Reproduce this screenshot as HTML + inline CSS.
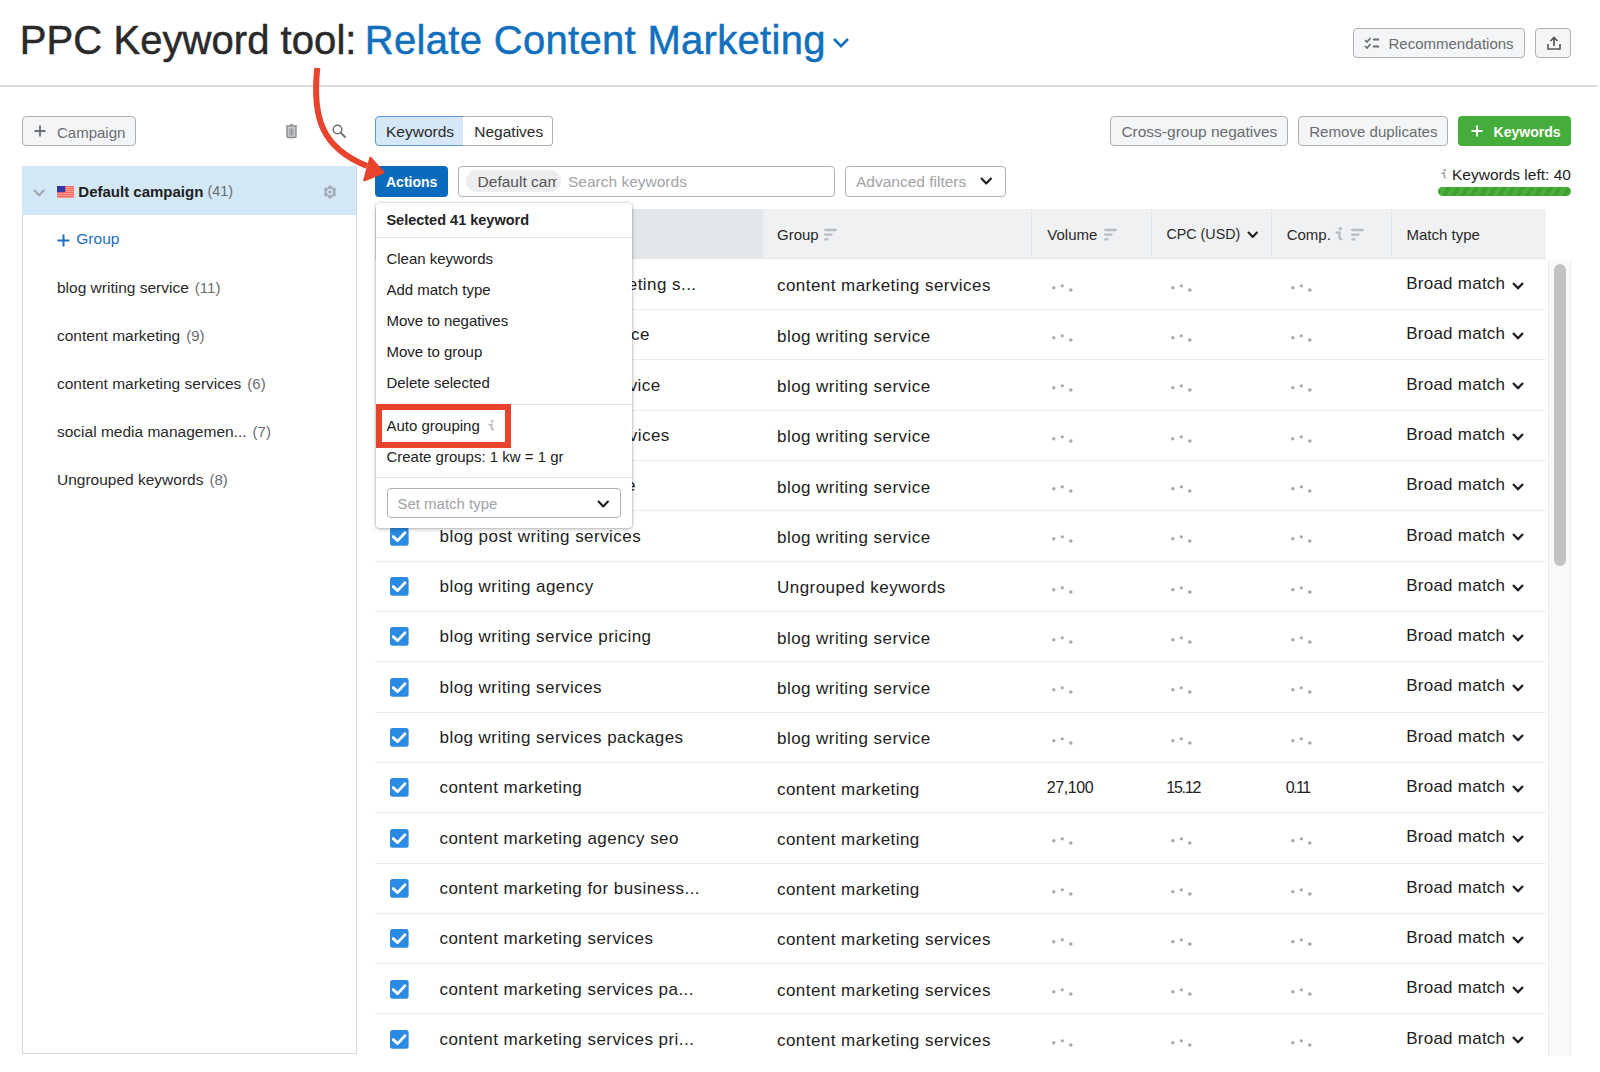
<!DOCTYPE html>
<html><head><meta charset="utf-8">
<style>
*{box-sizing:border-box;margin:0;padding:0}
html,body{width:1600px;height:1072px;overflow:hidden;background:#fff}
body{font-family:"Liberation Sans",sans-serif;color:#222;position:relative}
.a{position:absolute}
.t{position:absolute;white-space:nowrap;line-height:1}
svg{overflow:visible}
</style></head><body>
<div class="t" style="left:19.8px;top:20.14px;font-size:40px;color:#2a2a2a;font-weight:normal;-webkit-text-stroke:0.5px currentColor;letter-spacing:0.06px">PPC Keyword tool:</div>
<div class="t" style="left:364.8px;top:20.14px;font-size:40px;color:#1170bd;font-weight:normal;-webkit-text-stroke:0.5px currentColor;letter-spacing:0.31px">Relate Content Marketing</div>
<svg class="a" style="left:832.8px;top:37.6px" width="16" height="10.2" viewBox="0 0 16 10.2"><path d="M1 1 L8 8.2 L15 1" fill="none" stroke="#1170bd" stroke-width="2.7"/></svg>
<div class="a" style="left:1353px;top:27.5px;width:172px;height:30.5px;border:1px solid #adb1b5;border-radius:4px;background:#f4f5f6"></div>
<div class="t" style="left:1388.5px;top:35.70px;font-size:15px;color:#6a6d72;font-weight:normal;">Recommendations</div>
<svg class="a" style="left:1364px;top:37px" width="16" height="12" viewBox="0 0 16 12"><path d="M1 3 L3 5 L6.5 1" fill="none" stroke="#6a6d72" stroke-width="1.6"/><path d="M1 9 L3 11 L6.5 7" fill="none" stroke="#6a6d72" stroke-width="1.6"/><path d="M9 2.5 H15 M9 9.5 H15" stroke="#6a6d72" stroke-width="1.8"/></svg>
<div class="a" style="left:1535px;top:27.5px;width:36px;height:30.5px;border:1px solid #adb1b5;border-radius:4px;background:#f4f5f6"></div>
<svg class="a" style="left:1547px;top:36px" width="14" height="14" viewBox="0 0 14 14"><path d="M7 10 V2 M3.5 5 L7 1.5 L10.5 5" fill="none" stroke="#555" stroke-width="1.7"/><path d="M1 8 V13 H13 V8" fill="none" stroke="#555" stroke-width="1.6"/></svg>
<div class="a" style="left:0px;top:85px;width:1597px;height:2px;background:#d9dbdd"></div>
<div class="a" style="left:22px;top:116px;width:114px;height:30px;border:1px solid #adb1b5;border-radius:4px;background:#f4f5f6"></div>
<svg class="a" style="left:34px;top:125px" width="12" height="12" viewBox="0 0 12 12"><path d="M6 0.5 V11.5 M0.5 6 H11.5" stroke="#6a6d72" stroke-width="1.8"/></svg>
<div class="t" style="left:57px;top:124.60px;font-size:15px;color:#6a6d72;font-weight:normal;">Campaign</div>
<svg class="a" style="left:285px;top:123px" width="13" height="15" viewBox="0 0 13 15"><path d="M1 3 H12" stroke="#8a8d91" stroke-width="1.6"/><path d="M5 2 H8" stroke="#8a8d91" stroke-width="1.6"/><path d="M2 4 V13.5 Q2 14.5 3 14.5 H10 Q11 14.5 11 13.5 V4" fill="#c9cbcd" stroke="#8a8d91" stroke-width="1.4"/><path d="M5 5.5 V12.5 M6.5 5.5 V12.5 M8 5.5 V12.5" stroke="#8a8d91" stroke-width="0.9"/></svg>
<svg class="a" style="left:332px;top:124px" width="14" height="14" viewBox="0 0 14 14"><circle cx="5.5" cy="5.5" r="4.3" fill="none" stroke="#6a6d72" stroke-width="1.5"/><path d="M8.7 8.7 L13 13" stroke="#6a6d72" stroke-width="1.8" stroke-linecap="round"/></svg>
<div class="a" style="left:22px;top:166px;width:335px;height:888px;border:1px solid #d7dadd;border-top:none"></div>
<div class="a" style="left:22px;top:166px;width:334px;height:49px;background:#d3e8f7"></div>
<svg class="a" style="left:32.8px;top:189px" width="12.2" height="7.8" viewBox="0 0 12.2 7.8"><path d="M1.45 1.45 L6.1 6.35 L10.75 1.45" fill="none" stroke="#9ca1a6" stroke-width="1.9" stroke-linecap="round" stroke-linejoin="round"/></svg>
<svg class="a" style="left:56.5px;top:185.8px" width="16.7" height="12" viewBox="0 0 16.7 12"><rect x="0" y="0" width="17" height="12" fill="#f6655e"/><rect x="0" y="1.2" width="17" height="0.9" fill="#ffa59b"/><rect x="0" y="3.2" width="17" height="0.9" fill="#ffa59b"/><rect x="0" y="5.2" width="17" height="0.9" fill="#ffa59b"/><rect x="0" y="7.2" width="17" height="0.9" fill="#ffa59b"/><rect x="0" y="9.2" width="17" height="0.9" fill="#ffa59b"/><rect x="0" y="11.2" width="17" height="0.9" fill="#ffa59b"/><rect x="0" y="0" width="8.3" height="6.2" fill="#3438a4"/></svg>
<div class="t" style="left:78.3px;top:183.80px;font-size:15px;color:#1e1e1e;font-weight:bold;">Default campaign</div>
<div class="t" style="left:207.5px;top:184.40px;font-size:14.3px;color:#6a6d72;font-weight:normal;">(41)</div>
<svg class="a" style="left:323.4px;top:185.1px" width="14" height="14" viewBox="0 0 14 14"><g fill="#a2adb6"><rect x="4.9" y="0.6" width="4.2" height="12.8" rx="1.6"/><rect x="4.9" y="0.6" width="4.2" height="12.8" rx="1.6" transform="rotate(60 7 7)"/><rect x="4.9" y="0.6" width="4.2" height="12.8" rx="1.6" transform="rotate(120 7 7)"/><circle cx="7" cy="7" r="5"/></g><circle cx="7" cy="7" r="3.2" fill="#d3e8f7"/><circle cx="7" cy="7" r="1.7" fill="#a2adb6"/></svg>
<svg class="a" style="left:57px;top:233.5px" width="13" height="13" viewBox="0 0 13 13"><path d="M6.5 0.5 V12.5 M0.5 6.5 H12.5" stroke="#1a6fc0" stroke-width="2"/></svg>
<div class="t" style="left:76.3px;top:231.48px;font-size:15.5px;color:#1a6fc0;font-weight:normal;">Group</div>
<div class="t" style="left:57px;top:280.28px;font-size:15.5px;color:#2a2a2a;font-weight:normal;">blog writing service<span style="color:#6a6d72;margin-left:6px;font-size:15px">(11)</span></div>
<div class="t" style="left:57px;top:328.28px;font-size:15.5px;color:#2a2a2a;font-weight:normal;">content marketing<span style="color:#6a6d72;margin-left:6px;font-size:15px">(9)</span></div>
<div class="t" style="left:57px;top:376.28px;font-size:15.5px;color:#2a2a2a;font-weight:normal;">content marketing services<span style="color:#6a6d72;margin-left:6px;font-size:15px">(6)</span></div>
<div class="t" style="left:57px;top:424.28px;font-size:15.5px;color:#2a2a2a;font-weight:normal;">social media managemen...<span style="color:#6a6d72;margin-left:6px;font-size:15px">(7)</span></div>
<div class="t" style="left:57px;top:472.28px;font-size:15.5px;color:#2a2a2a;font-weight:normal;">Ungrouped keywords<span style="color:#6a6d72;margin-left:6px;font-size:15px">(8)</span></div>
<div class="a" style="left:375px;top:116px;width:89px;height:30px;border:1px solid #5a9bd8;border-radius:4px 0 0 4px;background:#d6e7f7"></div>
<div class="a" style="left:463px;top:116px;width:90px;height:30px;border:1px solid #adb1b5;border-left:none;border-radius:0 4px 4px 0;background:#fff"></div>
<div class="t" style="left:386px;top:124.08px;font-size:15.5px;color:#2a2a2a;font-weight:normal;">Keywords</div>
<div class="t" style="left:474.3px;top:124.08px;font-size:15.5px;color:#2a2a2a;font-weight:normal;">Negatives</div>
<div class="a" style="left:1110px;top:116px;width:178px;height:30px;border:1px solid #adb1b5;border-radius:4px;background:#f4f5f6"></div>
<div class="t" style="left:1121.4px;top:124.08px;font-size:15.5px;color:#6a6d72;font-weight:normal;">Cross-group negatives</div>
<div class="a" style="left:1298px;top:116px;width:150px;height:30px;border:1px solid #adb1b5;border-radius:4px;background:#f4f5f6"></div>
<div class="t" style="left:1309.2px;top:124.42px;font-size:15.1px;color:#6a6d72;font-weight:normal;">Remove duplicates</div>
<div class="a" style="left:1458px;top:116px;width:113px;height:30px;border-radius:4px;background:#45ad3b"></div>
<svg class="a" style="left:1471px;top:125px" width="12" height="12" viewBox="0 0 12 12"><path d="M6 0.5 V11.5 M0.5 6 H11.5" stroke="#fff" stroke-width="2"/></svg>
<div class="t" style="left:1493.6px;top:125.35px;font-size:14px;color:#fff;font-weight:bold;">Keywords</div>
<div class="a" style="left:375px;top:166px;width:73px;height:30.5px;border-radius:4px;background:#0a6abb"></div>
<div class="t" style="left:386px;top:174.85px;font-size:14px;color:#fff;font-weight:bold;">Actions</div>
<div class="a" style="left:457.5px;top:166px;width:377px;height:30.5px;border:1px solid #adb1b5;border-radius:4px;background:#fff"></div>
<div class="a" style="left:466px;top:170px;width:95px;height:22px;border-radius:11px;background:#eceef0"></div>
<div class="a" style="left:477px;top:166px;width:80px;height:30px;overflow:hidden"><div class="t" style="left:0.6px;top:7.58px;font-size:15.5px;color:#555;font-weight:normal;">Default campaign</div>
</div>
<div class="t" style="left:568px;top:173.58px;font-size:15.5px;color:#a0a3a7;font-weight:normal;">Search keywords</div>
<div class="a" style="left:845px;top:166px;width:161px;height:30.5px;border:1px solid #adb1b5;border-radius:4px;background:#fff"></div>
<div class="t" style="left:856px;top:173.58px;font-size:15.5px;color:#a0a3a7;font-weight:normal;">Advanced filters</div>
<svg class="a" style="left:980px;top:177px" width="12.5" height="8" viewBox="0 0 12.5 8"><path d="M1.6 1.6 L6.25 6.4 L10.9 1.6" fill="none" stroke="#222" stroke-width="2.2" stroke-linecap="round" stroke-linejoin="round"/></svg>
<svg class="a" style="left:1440.6px;top:169.2px" width="5.76" height="9.36" viewBox="0 0 5.76 9.36"><g transform="scale(0.72)"><circle cx="5.2" cy="1.7" r="1.75" fill="#a3a9ae"/><path d="M0.6 5.7 H4.5 V10.2 Q4.5 12.1 6.3 12.1 H7.4" fill="none" stroke="#a3a9ae" stroke-width="2.3"/></g></svg>
<div class="t" style="left:1452px;top:166.88px;font-size:15.5px;color:#222;font-weight:normal;">Keywords left: 40</div>
<div class="a" style="left:1438px;top:187px;width:133px;height:9px;border-radius:5px;background:repeating-linear-gradient(-60deg,#4aae3a 0 4px,#3f9f31 4px 8px)"></div>
<div class="a" style="left:375px;top:209px;width:388px;height:50px;background:#e4e7e9"></div>
<div class="a" style="left:763px;top:209px;width:783px;height:50px;background:#eff1f3"></div>
<div class="a" style="left:1031px;top:209px;width:1px;height:50px;background:#e2e5e8"></div>
<div class="a" style="left:1151px;top:209px;width:1px;height:50px;background:#e2e5e8"></div>
<div class="a" style="left:1271px;top:209px;width:1px;height:50px;background:#e2e5e8"></div>
<div class="a" style="left:1391px;top:209px;width:1px;height:50px;background:#e2e5e8"></div>
<div class="a" style="left:375px;top:258px;width:1171px;height:1px;background:#e3e6e8"></div>
<div class="t" style="left:777px;top:226.60px;font-size:15px;color:#2a2a2a;font-weight:normal;">Group</div>
<svg class="a" style="left:823.5px;top:229px" width="13" height="11" viewBox="0 0 13 11"><path d="M1.2 1 H11.8 M1.2 5.7 H7.5 M1.2 10.4 H3.5" stroke="#b9bec3" stroke-width="2.3" stroke-linecap="round"/></svg>
<div class="t" style="left:1047.3px;top:226.60px;font-size:15px;color:#2a2a2a;font-weight:normal;">Volume</div>
<svg class="a" style="left:1103.5px;top:229px" width="13" height="11" viewBox="0 0 13 11"><path d="M1.2 1 H11.8 M1.2 5.7 H7.5 M1.2 10.4 H3.5" stroke="#b9bec3" stroke-width="2.3" stroke-linecap="round"/></svg>
<div class="t" style="left:1166.4px;top:227.20px;font-size:14.3px;color:#2a2a2a;font-weight:normal;">CPC (USD)</div>
<svg class="a" style="left:1247.4px;top:230.5px" width="11.5" height="7.5" viewBox="0 0 11.5 7.5"><path d="M1.6 1.6 L5.75 5.9 L9.9 1.6" fill="none" stroke="#222" stroke-width="2.2" stroke-linecap="round" stroke-linejoin="round"/></svg>
<div class="t" style="left:1286.7px;top:226.60px;font-size:15px;color:#2a2a2a;font-weight:normal;">Comp.</div>
<svg class="a" style="left:1334.6px;top:226.9px" width="8.0" height="13.0" viewBox="0 0 8.0 13.0"><g transform="scale(1.0)"><circle cx="5.2" cy="1.7" r="1.75" fill="#b7bcc0"/><path d="M0.6 5.7 H4.5 V10.2 Q4.5 12.1 6.3 12.1 H7.4" fill="none" stroke="#b7bcc0" stroke-width="2.3"/></g></svg>
<svg class="a" style="left:1351px;top:229px" width="13" height="11" viewBox="0 0 13 11"><path d="M1.2 1 H11.8 M1.2 5.7 H7.5 M1.2 10.4 H3.5" stroke="#b9bec3" stroke-width="2.3" stroke-linecap="round"/></svg>
<div class="t" style="left:1406.5px;top:226.60px;font-size:15px;color:#2a2a2a;font-weight:normal;">Match type</div>
<div class="a" style="left:375px;top:309.0px;width:1171px;height:1px;background:#eceef0"></div>
<svg class="a" style="left:389.9px;top:275.2px" width="19" height="19" viewBox="0 0 19 19"><rect x="0" y="0" width="18.6" height="18.8" rx="2.5" fill="#2b8ae2"/><path d="M3.2 9.6 L7.6 13.6 L15 5.8" fill="none" stroke="#fff" stroke-width="2.8" stroke-linecap="round" stroke-linejoin="round"/></svg>
<div class="t" style="left:296.5px;width:400px;text-align:right;top:276.11px;font-size:17px;letter-spacing:0.45px;color:#222">b2b content marketing s...</div>
<div class="t" style="left:777px;top:277.31px;font-size:17px;color:#222;font-weight:normal;letter-spacing:0.45px">content marketing services</div>
<svg class="a" style="left:1051.5px;top:283.7px" width="21" height="8" viewBox="0 0 21 8"><circle cx="1.8" cy="3.8" r="1.7" fill="#a9a9a9"/><circle cx="10.3" cy="1.8" r="1.6" fill="#a9a9a9"/><circle cx="18.8" cy="6" r="1.8" fill="#a9a9a9"/></svg>
<svg class="a" style="left:1171px;top:283.7px" width="21" height="8" viewBox="0 0 21 8"><circle cx="1.8" cy="3.8" r="1.7" fill="#a9a9a9"/><circle cx="10.3" cy="1.8" r="1.6" fill="#a9a9a9"/><circle cx="18.8" cy="6" r="1.8" fill="#a9a9a9"/></svg>
<svg class="a" style="left:1290.5px;top:283.7px" width="21" height="8" viewBox="0 0 21 8"><circle cx="1.8" cy="3.8" r="1.7" fill="#a9a9a9"/><circle cx="10.3" cy="1.8" r="1.6" fill="#a9a9a9"/><circle cx="18.8" cy="6" r="1.8" fill="#a9a9a9"/></svg>
<div class="t" style="left:1406.2px;top:274.91px;font-size:17px;color:#222;font-weight:normal;letter-spacing:0.25px">Broad match</div>
<svg class="a" style="left:1512px;top:281.59999999999997px" width="12" height="8" viewBox="0 0 12 8"><path d="M1.7 1.7 L6.0 6.3 L10.3 1.7" fill="none" stroke="#222" stroke-width="2.4" stroke-linecap="round" stroke-linejoin="round"/></svg>
<div class="a" style="left:375px;top:359.32px;width:1171px;height:1px;background:#eceef0"></div>
<svg class="a" style="left:389.9px;top:325.52px" width="19" height="19" viewBox="0 0 19 19"><rect x="0" y="0" width="18.6" height="18.8" rx="2.5" fill="#2b8ae2"/><path d="M3.2 9.6 L7.6 13.6 L15 5.8" fill="none" stroke="#fff" stroke-width="2.8" stroke-linecap="round" stroke-linejoin="round"/></svg>
<div class="t" style="left:249.89999999999998px;width:400px;text-align:right;top:326.43px;font-size:17px;letter-spacing:0.45px;color:#222">best blog writing service</div>
<div class="t" style="left:777px;top:327.63px;font-size:17px;color:#222;font-weight:normal;letter-spacing:0.45px">blog writing service</div>
<svg class="a" style="left:1051.5px;top:334.02px" width="21" height="8" viewBox="0 0 21 8"><circle cx="1.8" cy="3.8" r="1.7" fill="#a9a9a9"/><circle cx="10.3" cy="1.8" r="1.6" fill="#a9a9a9"/><circle cx="18.8" cy="6" r="1.8" fill="#a9a9a9"/></svg>
<svg class="a" style="left:1171px;top:334.02px" width="21" height="8" viewBox="0 0 21 8"><circle cx="1.8" cy="3.8" r="1.7" fill="#a9a9a9"/><circle cx="10.3" cy="1.8" r="1.6" fill="#a9a9a9"/><circle cx="18.8" cy="6" r="1.8" fill="#a9a9a9"/></svg>
<svg class="a" style="left:1290.5px;top:334.02px" width="21" height="8" viewBox="0 0 21 8"><circle cx="1.8" cy="3.8" r="1.7" fill="#a9a9a9"/><circle cx="10.3" cy="1.8" r="1.6" fill="#a9a9a9"/><circle cx="18.8" cy="6" r="1.8" fill="#a9a9a9"/></svg>
<div class="t" style="left:1406.2px;top:325.23px;font-size:17px;color:#222;font-weight:normal;letter-spacing:0.25px">Broad match</div>
<svg class="a" style="left:1512px;top:331.91999999999996px" width="12" height="8" viewBox="0 0 12 8"><path d="M1.7 1.7 L6.0 6.3 L10.3 1.7" fill="none" stroke="#222" stroke-width="2.4" stroke-linecap="round" stroke-linejoin="round"/></svg>
<div class="a" style="left:375px;top:409.64px;width:1171px;height:1px;background:#eceef0"></div>
<svg class="a" style="left:389.9px;top:375.84px" width="19" height="19" viewBox="0 0 19 19"><rect x="0" y="0" width="18.6" height="18.8" rx="2.5" fill="#2b8ae2"/><path d="M3.2 9.6 L7.6 13.6 L15 5.8" fill="none" stroke="#fff" stroke-width="2.8" stroke-linecap="round" stroke-linejoin="round"/></svg>
<div class="t" style="left:260.70000000000005px;width:400px;text-align:right;top:376.75px;font-size:17px;letter-spacing:0.45px;color:#222">blog article writing service</div>
<div class="t" style="left:777px;top:377.95px;font-size:17px;color:#222;font-weight:normal;letter-spacing:0.45px">blog writing service</div>
<svg class="a" style="left:1051.5px;top:384.34px" width="21" height="8" viewBox="0 0 21 8"><circle cx="1.8" cy="3.8" r="1.7" fill="#a9a9a9"/><circle cx="10.3" cy="1.8" r="1.6" fill="#a9a9a9"/><circle cx="18.8" cy="6" r="1.8" fill="#a9a9a9"/></svg>
<svg class="a" style="left:1171px;top:384.34px" width="21" height="8" viewBox="0 0 21 8"><circle cx="1.8" cy="3.8" r="1.7" fill="#a9a9a9"/><circle cx="10.3" cy="1.8" r="1.6" fill="#a9a9a9"/><circle cx="18.8" cy="6" r="1.8" fill="#a9a9a9"/></svg>
<svg class="a" style="left:1290.5px;top:384.34px" width="21" height="8" viewBox="0 0 21 8"><circle cx="1.8" cy="3.8" r="1.7" fill="#a9a9a9"/><circle cx="10.3" cy="1.8" r="1.6" fill="#a9a9a9"/><circle cx="18.8" cy="6" r="1.8" fill="#a9a9a9"/></svg>
<div class="t" style="left:1406.2px;top:375.55px;font-size:17px;color:#222;font-weight:normal;letter-spacing:0.25px">Broad match</div>
<svg class="a" style="left:1512px;top:382.23999999999995px" width="12" height="8" viewBox="0 0 12 8"><path d="M1.7 1.7 L6.0 6.3 L10.3 1.7" fill="none" stroke="#222" stroke-width="2.4" stroke-linecap="round" stroke-linejoin="round"/></svg>
<div class="a" style="left:375px;top:459.96000000000004px;width:1171px;height:1px;background:#eceef0"></div>
<svg class="a" style="left:389.9px;top:426.15999999999997px" width="19" height="19" viewBox="0 0 19 19"><rect x="0" y="0" width="18.6" height="18.8" rx="2.5" fill="#2b8ae2"/><path d="M3.2 9.6 L7.6 13.6 L15 5.8" fill="none" stroke="#fff" stroke-width="2.8" stroke-linecap="round" stroke-linejoin="round"/></svg>
<div class="t" style="left:269.79999999999995px;width:400px;text-align:right;top:427.07px;font-size:17px;letter-spacing:0.45px;color:#222">blog content writing services</div>
<div class="t" style="left:777px;top:428.27px;font-size:17px;color:#222;font-weight:normal;letter-spacing:0.45px">blog writing service</div>
<svg class="a" style="left:1051.5px;top:434.65999999999997px" width="21" height="8" viewBox="0 0 21 8"><circle cx="1.8" cy="3.8" r="1.7" fill="#a9a9a9"/><circle cx="10.3" cy="1.8" r="1.6" fill="#a9a9a9"/><circle cx="18.8" cy="6" r="1.8" fill="#a9a9a9"/></svg>
<svg class="a" style="left:1171px;top:434.65999999999997px" width="21" height="8" viewBox="0 0 21 8"><circle cx="1.8" cy="3.8" r="1.7" fill="#a9a9a9"/><circle cx="10.3" cy="1.8" r="1.6" fill="#a9a9a9"/><circle cx="18.8" cy="6" r="1.8" fill="#a9a9a9"/></svg>
<svg class="a" style="left:1290.5px;top:434.65999999999997px" width="21" height="8" viewBox="0 0 21 8"><circle cx="1.8" cy="3.8" r="1.7" fill="#a9a9a9"/><circle cx="10.3" cy="1.8" r="1.6" fill="#a9a9a9"/><circle cx="18.8" cy="6" r="1.8" fill="#a9a9a9"/></svg>
<div class="t" style="left:1406.2px;top:425.87px;font-size:17px;color:#222;font-weight:normal;letter-spacing:0.25px">Broad match</div>
<svg class="a" style="left:1512px;top:432.55999999999995px" width="12" height="8" viewBox="0 0 12 8"><path d="M1.7 1.7 L6.0 6.3 L10.3 1.7" fill="none" stroke="#222" stroke-width="2.4" stroke-linecap="round" stroke-linejoin="round"/></svg>
<div class="a" style="left:375px;top:510.28px;width:1171px;height:1px;background:#eceef0"></div>
<svg class="a" style="left:389.9px;top:476.48px" width="19" height="19" viewBox="0 0 19 19"><rect x="0" y="0" width="18.6" height="18.8" rx="2.5" fill="#2b8ae2"/><path d="M3.2 9.6 L7.6 13.6 L15 5.8" fill="none" stroke="#fff" stroke-width="2.8" stroke-linecap="round" stroke-linejoin="round"/></svg>
<div class="t" style="left:236.0px;width:400px;text-align:right;top:477.39px;font-size:17px;letter-spacing:0.45px;color:#222">blog post writing service</div>
<div class="t" style="left:777px;top:478.59px;font-size:17px;color:#222;font-weight:normal;letter-spacing:0.45px">blog writing service</div>
<svg class="a" style="left:1051.5px;top:484.98px" width="21" height="8" viewBox="0 0 21 8"><circle cx="1.8" cy="3.8" r="1.7" fill="#a9a9a9"/><circle cx="10.3" cy="1.8" r="1.6" fill="#a9a9a9"/><circle cx="18.8" cy="6" r="1.8" fill="#a9a9a9"/></svg>
<svg class="a" style="left:1171px;top:484.98px" width="21" height="8" viewBox="0 0 21 8"><circle cx="1.8" cy="3.8" r="1.7" fill="#a9a9a9"/><circle cx="10.3" cy="1.8" r="1.6" fill="#a9a9a9"/><circle cx="18.8" cy="6" r="1.8" fill="#a9a9a9"/></svg>
<svg class="a" style="left:1290.5px;top:484.98px" width="21" height="8" viewBox="0 0 21 8"><circle cx="1.8" cy="3.8" r="1.7" fill="#a9a9a9"/><circle cx="10.3" cy="1.8" r="1.6" fill="#a9a9a9"/><circle cx="18.8" cy="6" r="1.8" fill="#a9a9a9"/></svg>
<div class="t" style="left:1406.2px;top:476.19px;font-size:17px;color:#222;font-weight:normal;letter-spacing:0.25px">Broad match</div>
<svg class="a" style="left:1512px;top:482.88px" width="12" height="8" viewBox="0 0 12 8"><path d="M1.7 1.7 L6.0 6.3 L10.3 1.7" fill="none" stroke="#222" stroke-width="2.4" stroke-linecap="round" stroke-linejoin="round"/></svg>
<div class="a" style="left:375px;top:560.6px;width:1171px;height:1px;background:#eceef0"></div>
<svg class="a" style="left:389.9px;top:526.8px" width="19" height="19" viewBox="0 0 19 19"><rect x="0" y="0" width="18.6" height="18.8" rx="2.5" fill="#2b8ae2"/><path d="M3.2 9.6 L7.6 13.6 L15 5.8" fill="none" stroke="#fff" stroke-width="2.8" stroke-linecap="round" stroke-linejoin="round"/></svg>
<div class="t" style="left:439.5px;top:527.71px;font-size:17px;color:#222;font-weight:normal;letter-spacing:0.45px">blog post writing services</div>
<div class="t" style="left:777px;top:528.91px;font-size:17px;color:#222;font-weight:normal;letter-spacing:0.45px">blog writing service</div>
<svg class="a" style="left:1051.5px;top:535.3px" width="21" height="8" viewBox="0 0 21 8"><circle cx="1.8" cy="3.8" r="1.7" fill="#a9a9a9"/><circle cx="10.3" cy="1.8" r="1.6" fill="#a9a9a9"/><circle cx="18.8" cy="6" r="1.8" fill="#a9a9a9"/></svg>
<svg class="a" style="left:1171px;top:535.3px" width="21" height="8" viewBox="0 0 21 8"><circle cx="1.8" cy="3.8" r="1.7" fill="#a9a9a9"/><circle cx="10.3" cy="1.8" r="1.6" fill="#a9a9a9"/><circle cx="18.8" cy="6" r="1.8" fill="#a9a9a9"/></svg>
<svg class="a" style="left:1290.5px;top:535.3px" width="21" height="8" viewBox="0 0 21 8"><circle cx="1.8" cy="3.8" r="1.7" fill="#a9a9a9"/><circle cx="10.3" cy="1.8" r="1.6" fill="#a9a9a9"/><circle cx="18.8" cy="6" r="1.8" fill="#a9a9a9"/></svg>
<div class="t" style="left:1406.2px;top:526.51px;font-size:17px;color:#222;font-weight:normal;letter-spacing:0.25px">Broad match</div>
<svg class="a" style="left:1512px;top:533.1999999999999px" width="12" height="8" viewBox="0 0 12 8"><path d="M1.7 1.7 L6.0 6.3 L10.3 1.7" fill="none" stroke="#222" stroke-width="2.4" stroke-linecap="round" stroke-linejoin="round"/></svg>
<div class="a" style="left:375px;top:610.9200000000001px;width:1171px;height:1px;background:#eceef0"></div>
<svg class="a" style="left:389.9px;top:577.12px" width="19" height="19" viewBox="0 0 19 19"><rect x="0" y="0" width="18.6" height="18.8" rx="2.5" fill="#2b8ae2"/><path d="M3.2 9.6 L7.6 13.6 L15 5.8" fill="none" stroke="#fff" stroke-width="2.8" stroke-linecap="round" stroke-linejoin="round"/></svg>
<div class="t" style="left:439.5px;top:578.03px;font-size:17px;color:#222;font-weight:normal;letter-spacing:0.45px">blog writing agency</div>
<div class="t" style="left:777px;top:579.23px;font-size:17px;color:#222;font-weight:normal;letter-spacing:0.45px">Ungrouped keywords</div>
<svg class="a" style="left:1051.5px;top:585.62px" width="21" height="8" viewBox="0 0 21 8"><circle cx="1.8" cy="3.8" r="1.7" fill="#a9a9a9"/><circle cx="10.3" cy="1.8" r="1.6" fill="#a9a9a9"/><circle cx="18.8" cy="6" r="1.8" fill="#a9a9a9"/></svg>
<svg class="a" style="left:1171px;top:585.62px" width="21" height="8" viewBox="0 0 21 8"><circle cx="1.8" cy="3.8" r="1.7" fill="#a9a9a9"/><circle cx="10.3" cy="1.8" r="1.6" fill="#a9a9a9"/><circle cx="18.8" cy="6" r="1.8" fill="#a9a9a9"/></svg>
<svg class="a" style="left:1290.5px;top:585.62px" width="21" height="8" viewBox="0 0 21 8"><circle cx="1.8" cy="3.8" r="1.7" fill="#a9a9a9"/><circle cx="10.3" cy="1.8" r="1.6" fill="#a9a9a9"/><circle cx="18.8" cy="6" r="1.8" fill="#a9a9a9"/></svg>
<div class="t" style="left:1406.2px;top:576.83px;font-size:17px;color:#222;font-weight:normal;letter-spacing:0.25px">Broad match</div>
<svg class="a" style="left:1512px;top:583.52px" width="12" height="8" viewBox="0 0 12 8"><path d="M1.7 1.7 L6.0 6.3 L10.3 1.7" fill="none" stroke="#222" stroke-width="2.4" stroke-linecap="round" stroke-linejoin="round"/></svg>
<div class="a" style="left:375px;top:661.24px;width:1171px;height:1px;background:#eceef0"></div>
<svg class="a" style="left:389.9px;top:627.44px" width="19" height="19" viewBox="0 0 19 19"><rect x="0" y="0" width="18.6" height="18.8" rx="2.5" fill="#2b8ae2"/><path d="M3.2 9.6 L7.6 13.6 L15 5.8" fill="none" stroke="#fff" stroke-width="2.8" stroke-linecap="round" stroke-linejoin="round"/></svg>
<div class="t" style="left:439.5px;top:628.35px;font-size:17px;color:#222;font-weight:normal;letter-spacing:0.45px">blog writing service pricing</div>
<div class="t" style="left:777px;top:629.55px;font-size:17px;color:#222;font-weight:normal;letter-spacing:0.45px">blog writing service</div>
<svg class="a" style="left:1051.5px;top:635.94px" width="21" height="8" viewBox="0 0 21 8"><circle cx="1.8" cy="3.8" r="1.7" fill="#a9a9a9"/><circle cx="10.3" cy="1.8" r="1.6" fill="#a9a9a9"/><circle cx="18.8" cy="6" r="1.8" fill="#a9a9a9"/></svg>
<svg class="a" style="left:1171px;top:635.94px" width="21" height="8" viewBox="0 0 21 8"><circle cx="1.8" cy="3.8" r="1.7" fill="#a9a9a9"/><circle cx="10.3" cy="1.8" r="1.6" fill="#a9a9a9"/><circle cx="18.8" cy="6" r="1.8" fill="#a9a9a9"/></svg>
<svg class="a" style="left:1290.5px;top:635.94px" width="21" height="8" viewBox="0 0 21 8"><circle cx="1.8" cy="3.8" r="1.7" fill="#a9a9a9"/><circle cx="10.3" cy="1.8" r="1.6" fill="#a9a9a9"/><circle cx="18.8" cy="6" r="1.8" fill="#a9a9a9"/></svg>
<div class="t" style="left:1406.2px;top:627.15px;font-size:17px;color:#222;font-weight:normal;letter-spacing:0.25px">Broad match</div>
<svg class="a" style="left:1512px;top:633.84px" width="12" height="8" viewBox="0 0 12 8"><path d="M1.7 1.7 L6.0 6.3 L10.3 1.7" fill="none" stroke="#222" stroke-width="2.4" stroke-linecap="round" stroke-linejoin="round"/></svg>
<div class="a" style="left:375px;top:711.56px;width:1171px;height:1px;background:#eceef0"></div>
<svg class="a" style="left:389.9px;top:677.76px" width="19" height="19" viewBox="0 0 19 19"><rect x="0" y="0" width="18.6" height="18.8" rx="2.5" fill="#2b8ae2"/><path d="M3.2 9.6 L7.6 13.6 L15 5.8" fill="none" stroke="#fff" stroke-width="2.8" stroke-linecap="round" stroke-linejoin="round"/></svg>
<div class="t" style="left:439.5px;top:678.67px;font-size:17px;color:#222;font-weight:normal;letter-spacing:0.45px">blog writing services</div>
<div class="t" style="left:777px;top:679.87px;font-size:17px;color:#222;font-weight:normal;letter-spacing:0.45px">blog writing service</div>
<svg class="a" style="left:1051.5px;top:686.26px" width="21" height="8" viewBox="0 0 21 8"><circle cx="1.8" cy="3.8" r="1.7" fill="#a9a9a9"/><circle cx="10.3" cy="1.8" r="1.6" fill="#a9a9a9"/><circle cx="18.8" cy="6" r="1.8" fill="#a9a9a9"/></svg>
<svg class="a" style="left:1171px;top:686.26px" width="21" height="8" viewBox="0 0 21 8"><circle cx="1.8" cy="3.8" r="1.7" fill="#a9a9a9"/><circle cx="10.3" cy="1.8" r="1.6" fill="#a9a9a9"/><circle cx="18.8" cy="6" r="1.8" fill="#a9a9a9"/></svg>
<svg class="a" style="left:1290.5px;top:686.26px" width="21" height="8" viewBox="0 0 21 8"><circle cx="1.8" cy="3.8" r="1.7" fill="#a9a9a9"/><circle cx="10.3" cy="1.8" r="1.6" fill="#a9a9a9"/><circle cx="18.8" cy="6" r="1.8" fill="#a9a9a9"/></svg>
<div class="t" style="left:1406.2px;top:677.47px;font-size:17px;color:#222;font-weight:normal;letter-spacing:0.25px">Broad match</div>
<svg class="a" style="left:1512px;top:684.16px" width="12" height="8" viewBox="0 0 12 8"><path d="M1.7 1.7 L6.0 6.3 L10.3 1.7" fill="none" stroke="#222" stroke-width="2.4" stroke-linecap="round" stroke-linejoin="round"/></svg>
<div class="a" style="left:375px;top:761.88px;width:1171px;height:1px;background:#eceef0"></div>
<svg class="a" style="left:389.9px;top:728.0799999999999px" width="19" height="19" viewBox="0 0 19 19"><rect x="0" y="0" width="18.6" height="18.8" rx="2.5" fill="#2b8ae2"/><path d="M3.2 9.6 L7.6 13.6 L15 5.8" fill="none" stroke="#fff" stroke-width="2.8" stroke-linecap="round" stroke-linejoin="round"/></svg>
<div class="t" style="left:439.5px;top:728.99px;font-size:17px;color:#222;font-weight:normal;letter-spacing:0.45px">blog writing services packages</div>
<div class="t" style="left:777px;top:730.19px;font-size:17px;color:#222;font-weight:normal;letter-spacing:0.45px">blog writing service</div>
<svg class="a" style="left:1051.5px;top:736.5799999999999px" width="21" height="8" viewBox="0 0 21 8"><circle cx="1.8" cy="3.8" r="1.7" fill="#a9a9a9"/><circle cx="10.3" cy="1.8" r="1.6" fill="#a9a9a9"/><circle cx="18.8" cy="6" r="1.8" fill="#a9a9a9"/></svg>
<svg class="a" style="left:1171px;top:736.5799999999999px" width="21" height="8" viewBox="0 0 21 8"><circle cx="1.8" cy="3.8" r="1.7" fill="#a9a9a9"/><circle cx="10.3" cy="1.8" r="1.6" fill="#a9a9a9"/><circle cx="18.8" cy="6" r="1.8" fill="#a9a9a9"/></svg>
<svg class="a" style="left:1290.5px;top:736.5799999999999px" width="21" height="8" viewBox="0 0 21 8"><circle cx="1.8" cy="3.8" r="1.7" fill="#a9a9a9"/><circle cx="10.3" cy="1.8" r="1.6" fill="#a9a9a9"/><circle cx="18.8" cy="6" r="1.8" fill="#a9a9a9"/></svg>
<div class="t" style="left:1406.2px;top:727.79px;font-size:17px;color:#222;font-weight:normal;letter-spacing:0.25px">Broad match</div>
<svg class="a" style="left:1512px;top:734.4799999999999px" width="12" height="8" viewBox="0 0 12 8"><path d="M1.7 1.7 L6.0 6.3 L10.3 1.7" fill="none" stroke="#222" stroke-width="2.4" stroke-linecap="round" stroke-linejoin="round"/></svg>
<div class="a" style="left:375px;top:812.2px;width:1171px;height:1px;background:#eceef0"></div>
<svg class="a" style="left:389.9px;top:778.4px" width="19" height="19" viewBox="0 0 19 19"><rect x="0" y="0" width="18.6" height="18.8" rx="2.5" fill="#2b8ae2"/><path d="M3.2 9.6 L7.6 13.6 L15 5.8" fill="none" stroke="#fff" stroke-width="2.8" stroke-linecap="round" stroke-linejoin="round"/></svg>
<div class="t" style="left:439.5px;top:779.31px;font-size:17px;color:#222;font-weight:normal;letter-spacing:0.45px">content marketing</div>
<div class="t" style="left:777px;top:780.51px;font-size:17px;color:#222;font-weight:normal;letter-spacing:0.45px">content marketing</div>
<div class="t" style="left:1046.8px;top:780.16px;font-size:16px;color:#222;font-weight:normal;letter-spacing:-0.4px">27,100</div>
<div class="t" style="left:1166.2px;top:780.16px;font-size:16px;color:#222;font-weight:normal;letter-spacing:-1.2px">15.12</div>
<div class="t" style="left:1285.7px;top:780.16px;font-size:16px;color:#222;font-weight:normal;letter-spacing:-1.5px">0.11</div>
<div class="t" style="left:1406.2px;top:778.11px;font-size:17px;color:#222;font-weight:normal;letter-spacing:0.25px">Broad match</div>
<svg class="a" style="left:1512px;top:784.8px" width="12" height="8" viewBox="0 0 12 8"><path d="M1.7 1.7 L6.0 6.3 L10.3 1.7" fill="none" stroke="#222" stroke-width="2.4" stroke-linecap="round" stroke-linejoin="round"/></svg>
<div class="a" style="left:375px;top:862.52px;width:1171px;height:1px;background:#eceef0"></div>
<svg class="a" style="left:389.9px;top:828.72px" width="19" height="19" viewBox="0 0 19 19"><rect x="0" y="0" width="18.6" height="18.8" rx="2.5" fill="#2b8ae2"/><path d="M3.2 9.6 L7.6 13.6 L15 5.8" fill="none" stroke="#fff" stroke-width="2.8" stroke-linecap="round" stroke-linejoin="round"/></svg>
<div class="t" style="left:439.5px;top:829.63px;font-size:17px;color:#222;font-weight:normal;letter-spacing:0.45px">content marketing agency seo</div>
<div class="t" style="left:777px;top:830.83px;font-size:17px;color:#222;font-weight:normal;letter-spacing:0.45px">content marketing</div>
<svg class="a" style="left:1051.5px;top:837.22px" width="21" height="8" viewBox="0 0 21 8"><circle cx="1.8" cy="3.8" r="1.7" fill="#a9a9a9"/><circle cx="10.3" cy="1.8" r="1.6" fill="#a9a9a9"/><circle cx="18.8" cy="6" r="1.8" fill="#a9a9a9"/></svg>
<svg class="a" style="left:1171px;top:837.22px" width="21" height="8" viewBox="0 0 21 8"><circle cx="1.8" cy="3.8" r="1.7" fill="#a9a9a9"/><circle cx="10.3" cy="1.8" r="1.6" fill="#a9a9a9"/><circle cx="18.8" cy="6" r="1.8" fill="#a9a9a9"/></svg>
<svg class="a" style="left:1290.5px;top:837.22px" width="21" height="8" viewBox="0 0 21 8"><circle cx="1.8" cy="3.8" r="1.7" fill="#a9a9a9"/><circle cx="10.3" cy="1.8" r="1.6" fill="#a9a9a9"/><circle cx="18.8" cy="6" r="1.8" fill="#a9a9a9"/></svg>
<div class="t" style="left:1406.2px;top:828.43px;font-size:17px;color:#222;font-weight:normal;letter-spacing:0.25px">Broad match</div>
<svg class="a" style="left:1512px;top:835.12px" width="12" height="8" viewBox="0 0 12 8"><path d="M1.7 1.7 L6.0 6.3 L10.3 1.7" fill="none" stroke="#222" stroke-width="2.4" stroke-linecap="round" stroke-linejoin="round"/></svg>
<div class="a" style="left:375px;top:912.84px;width:1171px;height:1px;background:#eceef0"></div>
<svg class="a" style="left:389.9px;top:879.04px" width="19" height="19" viewBox="0 0 19 19"><rect x="0" y="0" width="18.6" height="18.8" rx="2.5" fill="#2b8ae2"/><path d="M3.2 9.6 L7.6 13.6 L15 5.8" fill="none" stroke="#fff" stroke-width="2.8" stroke-linecap="round" stroke-linejoin="round"/></svg>
<div class="t" style="left:439.5px;top:879.95px;font-size:17px;color:#222;font-weight:normal;letter-spacing:0.45px">content marketing for business...</div>
<div class="t" style="left:777px;top:881.15px;font-size:17px;color:#222;font-weight:normal;letter-spacing:0.45px">content marketing</div>
<svg class="a" style="left:1051.5px;top:887.54px" width="21" height="8" viewBox="0 0 21 8"><circle cx="1.8" cy="3.8" r="1.7" fill="#a9a9a9"/><circle cx="10.3" cy="1.8" r="1.6" fill="#a9a9a9"/><circle cx="18.8" cy="6" r="1.8" fill="#a9a9a9"/></svg>
<svg class="a" style="left:1171px;top:887.54px" width="21" height="8" viewBox="0 0 21 8"><circle cx="1.8" cy="3.8" r="1.7" fill="#a9a9a9"/><circle cx="10.3" cy="1.8" r="1.6" fill="#a9a9a9"/><circle cx="18.8" cy="6" r="1.8" fill="#a9a9a9"/></svg>
<svg class="a" style="left:1290.5px;top:887.54px" width="21" height="8" viewBox="0 0 21 8"><circle cx="1.8" cy="3.8" r="1.7" fill="#a9a9a9"/><circle cx="10.3" cy="1.8" r="1.6" fill="#a9a9a9"/><circle cx="18.8" cy="6" r="1.8" fill="#a9a9a9"/></svg>
<div class="t" style="left:1406.2px;top:878.75px;font-size:17px;color:#222;font-weight:normal;letter-spacing:0.25px">Broad match</div>
<svg class="a" style="left:1512px;top:885.4399999999999px" width="12" height="8" viewBox="0 0 12 8"><path d="M1.7 1.7 L6.0 6.3 L10.3 1.7" fill="none" stroke="#222" stroke-width="2.4" stroke-linecap="round" stroke-linejoin="round"/></svg>
<div class="a" style="left:375px;top:963.16px;width:1171px;height:1px;background:#eceef0"></div>
<svg class="a" style="left:389.9px;top:929.3599999999999px" width="19" height="19" viewBox="0 0 19 19"><rect x="0" y="0" width="18.6" height="18.8" rx="2.5" fill="#2b8ae2"/><path d="M3.2 9.6 L7.6 13.6 L15 5.8" fill="none" stroke="#fff" stroke-width="2.8" stroke-linecap="round" stroke-linejoin="round"/></svg>
<div class="t" style="left:439.5px;top:930.27px;font-size:17px;color:#222;font-weight:normal;letter-spacing:0.45px">content marketing services</div>
<div class="t" style="left:777px;top:931.47px;font-size:17px;color:#222;font-weight:normal;letter-spacing:0.45px">content marketing services</div>
<svg class="a" style="left:1051.5px;top:937.8599999999999px" width="21" height="8" viewBox="0 0 21 8"><circle cx="1.8" cy="3.8" r="1.7" fill="#a9a9a9"/><circle cx="10.3" cy="1.8" r="1.6" fill="#a9a9a9"/><circle cx="18.8" cy="6" r="1.8" fill="#a9a9a9"/></svg>
<svg class="a" style="left:1171px;top:937.8599999999999px" width="21" height="8" viewBox="0 0 21 8"><circle cx="1.8" cy="3.8" r="1.7" fill="#a9a9a9"/><circle cx="10.3" cy="1.8" r="1.6" fill="#a9a9a9"/><circle cx="18.8" cy="6" r="1.8" fill="#a9a9a9"/></svg>
<svg class="a" style="left:1290.5px;top:937.8599999999999px" width="21" height="8" viewBox="0 0 21 8"><circle cx="1.8" cy="3.8" r="1.7" fill="#a9a9a9"/><circle cx="10.3" cy="1.8" r="1.6" fill="#a9a9a9"/><circle cx="18.8" cy="6" r="1.8" fill="#a9a9a9"/></svg>
<div class="t" style="left:1406.2px;top:929.07px;font-size:17px;color:#222;font-weight:normal;letter-spacing:0.25px">Broad match</div>
<svg class="a" style="left:1512px;top:935.7599999999999px" width="12" height="8" viewBox="0 0 12 8"><path d="M1.7 1.7 L6.0 6.3 L10.3 1.7" fill="none" stroke="#222" stroke-width="2.4" stroke-linecap="round" stroke-linejoin="round"/></svg>
<div class="a" style="left:375px;top:1013.48px;width:1171px;height:1px;background:#eceef0"></div>
<svg class="a" style="left:389.9px;top:979.6800000000001px" width="19" height="19" viewBox="0 0 19 19"><rect x="0" y="0" width="18.6" height="18.8" rx="2.5" fill="#2b8ae2"/><path d="M3.2 9.6 L7.6 13.6 L15 5.8" fill="none" stroke="#fff" stroke-width="2.8" stroke-linecap="round" stroke-linejoin="round"/></svg>
<div class="t" style="left:439.5px;top:980.59px;font-size:17px;color:#222;font-weight:normal;letter-spacing:0.45px">content marketing services pa...</div>
<div class="t" style="left:777px;top:981.79px;font-size:17px;color:#222;font-weight:normal;letter-spacing:0.45px">content marketing services</div>
<svg class="a" style="left:1051.5px;top:988.1800000000001px" width="21" height="8" viewBox="0 0 21 8"><circle cx="1.8" cy="3.8" r="1.7" fill="#a9a9a9"/><circle cx="10.3" cy="1.8" r="1.6" fill="#a9a9a9"/><circle cx="18.8" cy="6" r="1.8" fill="#a9a9a9"/></svg>
<svg class="a" style="left:1171px;top:988.1800000000001px" width="21" height="8" viewBox="0 0 21 8"><circle cx="1.8" cy="3.8" r="1.7" fill="#a9a9a9"/><circle cx="10.3" cy="1.8" r="1.6" fill="#a9a9a9"/><circle cx="18.8" cy="6" r="1.8" fill="#a9a9a9"/></svg>
<svg class="a" style="left:1290.5px;top:988.1800000000001px" width="21" height="8" viewBox="0 0 21 8"><circle cx="1.8" cy="3.8" r="1.7" fill="#a9a9a9"/><circle cx="10.3" cy="1.8" r="1.6" fill="#a9a9a9"/><circle cx="18.8" cy="6" r="1.8" fill="#a9a9a9"/></svg>
<div class="t" style="left:1406.2px;top:979.39px;font-size:17px;color:#222;font-weight:normal;letter-spacing:0.25px">Broad match</div>
<svg class="a" style="left:1512px;top:986.08px" width="12" height="8" viewBox="0 0 12 8"><path d="M1.7 1.7 L6.0 6.3 L10.3 1.7" fill="none" stroke="#222" stroke-width="2.4" stroke-linecap="round" stroke-linejoin="round"/></svg>
<svg class="a" style="left:389.9px;top:1030.0px" width="19" height="19" viewBox="0 0 19 19"><rect x="0" y="0" width="18.6" height="18.8" rx="2.5" fill="#2b8ae2"/><path d="M3.2 9.6 L7.6 13.6 L15 5.8" fill="none" stroke="#fff" stroke-width="2.8" stroke-linecap="round" stroke-linejoin="round"/></svg>
<div class="t" style="left:439.5px;top:1030.91px;font-size:17px;color:#222;font-weight:normal;letter-spacing:0.45px">content marketing services pri...</div>
<div class="t" style="left:777px;top:1032.11px;font-size:17px;color:#222;font-weight:normal;letter-spacing:0.45px">content marketing services</div>
<svg class="a" style="left:1051.5px;top:1038.5px" width="21" height="8" viewBox="0 0 21 8"><circle cx="1.8" cy="3.8" r="1.7" fill="#a9a9a9"/><circle cx="10.3" cy="1.8" r="1.6" fill="#a9a9a9"/><circle cx="18.8" cy="6" r="1.8" fill="#a9a9a9"/></svg>
<svg class="a" style="left:1171px;top:1038.5px" width="21" height="8" viewBox="0 0 21 8"><circle cx="1.8" cy="3.8" r="1.7" fill="#a9a9a9"/><circle cx="10.3" cy="1.8" r="1.6" fill="#a9a9a9"/><circle cx="18.8" cy="6" r="1.8" fill="#a9a9a9"/></svg>
<svg class="a" style="left:1290.5px;top:1038.5px" width="21" height="8" viewBox="0 0 21 8"><circle cx="1.8" cy="3.8" r="1.7" fill="#a9a9a9"/><circle cx="10.3" cy="1.8" r="1.6" fill="#a9a9a9"/><circle cx="18.8" cy="6" r="1.8" fill="#a9a9a9"/></svg>
<div class="t" style="left:1406.2px;top:1029.71px;font-size:17px;color:#222;font-weight:normal;letter-spacing:0.25px">Broad match</div>
<svg class="a" style="left:1512px;top:1036.4px" width="12" height="8" viewBox="0 0 12 8"><path d="M1.7 1.7 L6.0 6.3 L10.3 1.7" fill="none" stroke="#222" stroke-width="2.4" stroke-linecap="round" stroke-linejoin="round"/></svg>
<div class="a" style="left:1548px;top:259.5px;width:22.5px;height:796px;background:#fafafa;border-left:1px solid #ececec;border-right:1px solid #ececec"></div>
<div class="a" style="left:1554px;top:264px;width:12px;height:301.5px;background:#c2c2c2;border-radius:6px"></div>
<div class="a" style="left:376px;top:202.5px;width:256px;height:325px;background:#fff;border-radius:4px;box-shadow:0 1px 4px rgba(0,0,0,0.28), 0 0 0 1px rgba(0,0,0,0.06)"></div>
<div class="t" style="left:386.4px;top:213.13px;font-size:14.5px;color:#222;font-weight:bold;">Selected 41 keyword</div>
<div class="a" style="left:376px;top:236.5px;width:256px;height:1px;background:#e0e3e6"></div>
<div class="t" style="left:386.4px;top:250.60px;font-size:15px;color:#222;font-weight:normal;">Clean keywords</div>
<div class="t" style="left:386.4px;top:281.63px;font-size:15px;color:#222;font-weight:normal;">Add match type</div>
<div class="t" style="left:386.4px;top:312.66px;font-size:15px;color:#222;font-weight:normal;">Move to negatives</div>
<div class="t" style="left:386.4px;top:343.69px;font-size:15px;color:#222;font-weight:normal;">Move to group</div>
<div class="t" style="left:386.4px;top:374.72px;font-size:15px;color:#222;font-weight:normal;">Delete selected</div>
<div class="a" style="left:376px;top:403.5px;width:256px;height:1px;background:#e0e3e6"></div>
<div class="t" style="left:386.4px;top:418.20px;font-size:15px;color:#222;font-weight:normal;">Auto grouping</div>
<svg class="a" style="left:487.6px;top:419.6px" width="6.4" height="10.4" viewBox="0 0 6.4 10.4"><g transform="scale(0.8)"><circle cx="5.2" cy="1.7" r="1.75" fill="#b7bcc0"/><path d="M0.6 5.7 H4.5 V10.2 Q4.5 12.1 6.3 12.1 H7.4" fill="none" stroke="#b7bcc0" stroke-width="2.3"/></g></svg>
<div class="t" style="left:386.4px;top:448.90px;font-size:15px;color:#222;font-weight:normal;">Create groups: 1 kw = 1 gr</div>
<div class="a" style="left:376px;top:476.5px;width:256px;height:1px;background:#e0e3e6"></div>
<div class="a" style="left:386.5px;top:487.5px;width:234px;height:30px;border:1px solid #adb1b5;border-radius:4px;background:#fff"></div>
<div class="t" style="left:397.4px;top:495.80px;font-size:15px;color:#a0a3a7;font-weight:normal;">Set match type</div>
<svg class="a" style="left:597px;top:499.5px" width="12.5" height="8" viewBox="0 0 12.5 8"><path d="M1.6 1.6 L6.25 6.4 L10.9 1.6" fill="none" stroke="#222" stroke-width="2.2" stroke-linecap="round" stroke-linejoin="round"/></svg>
<div class="a" style="left:376px;top:404px;width:134.5px;height:43.5px;border:6px solid #e8432c"></div>
<svg class="a" style="left:0px;top:0px" width="1600" height="1072" viewBox="0 0 1600 1072"><path d="M317.3 68 C 312 118, 322 148, 367 166" fill="none" stroke="#e8432c" stroke-width="6"/><path d="M364.5 180 L370.5 158 L383.2 172.5 Z" fill="#e8432c" stroke="#e8432c" stroke-width="2.6" stroke-linejoin="round"/></svg>
</body></html>
